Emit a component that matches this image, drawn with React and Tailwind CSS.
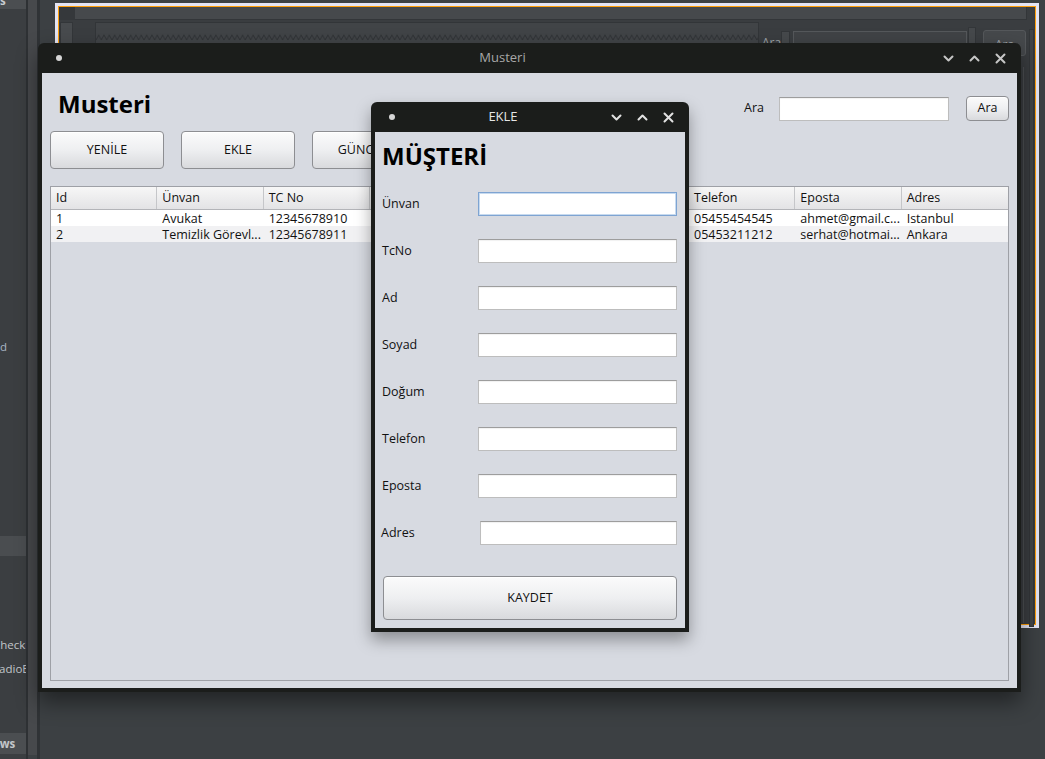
import React from "react";

const Chevron = ({ dir }) => (
    <svg width="11" height="7" viewBox="0 0 11 7" fill="none" stroke="currentColor" strokeWidth="2" strokeLinecap="round" strokeLinejoin="round">
        {dir === "down" ? <path d="M1.5 1.5 L5.5 5.5 L9.5 1.5" /> : <path d="M1.5 5.5 L5.5 1.5 L9.5 5.5" />}
    </svg>
);

const Close = () => (
    <svg width="11" height="11" viewBox="0 0 11 11" fill="none" stroke="currentColor" strokeWidth="2" strokeLinecap="round">
        <path d="M1.5 1.5 L9.5 9.5 M9.5 1.5 L1.5 9.5" />
    </svg>
);

const TitleBar = ({ title, active }) => (
    <div className={`flex h-[30px] items-center pl-[18px] pr-[15px] ${active ? "text-[#e2e2e2]" : "text-[#c6c6c6]"}`}>
        <span className="h-[6px] w-[6px] rounded-full bg-[#d6d6d6]" />
        <div className={`flex-1 text-center text-[13px] ${active ? "text-[#e6e6e6]" : "text-[#a8a8a8]"}`}>{title}</div>
        <div className="flex items-center gap-[15px]">
            <Chevron dir="down" />
            <Chevron dir="up" />
            <Close />
        </div>
    </div>
);

const Btn = ({ children, className = "" }) => (
    <button className={`flex shrink-0 items-center justify-center rounded-[4px] border border-[#8d8e92] bg-linear-to-b from-[#fbfbfb] via-[#eeeff1] to-[#d9dadd] text-[12.5px] text-[#111] shadow-[inset_0_1px_0_#ffffff] ${className}`}>
        {children}
    </button>
);

const Field = ({ focused, className = "" }) => (
    <div
        className={`h-[24px] bg-white ${
            focused
                ? "border border-[#7ea4d2] shadow-[inset_0_0_0_1px_#c7daef]"
                : "border border-[#bdbdbd] border-t-[#9d9d9d] shadow-[inset_0_1px_1px_rgba(0,0,0,0.06)]"
        } ${className}`}
    />
);

const cols = ["Id", "Ünvan", "TC No", "Ad", "Soyad", "Doğum", "Telefon", "Eposta", "Adres"];
const rows = [
    ["1", "Avukat", "12345678910", "Ahmet", "Yılmaz", "01.01.1980", "05455454545", "ahmet@gmail.c...", "Istanbul"],
    ["2", "Temizlik Görevl...", "12345678911", "Serhat", "Kaya", "05.05.1985", "05453211212", "serhat@hotmai...", "Ankara"],
];

const formRows = [
    ["Ünvan", true],
    ["TcNo"],
    ["Ad"],
    ["Soyad"],
    ["Doğum"],
    ["Telefon"],
    ["Eposta"],
];

export default function App() {
    return (
        <div className="relative flex h-[759px] w-[1045px] overflow-hidden bg-[#3c4043] font-['Open_Sans',sans-serif] text-[12.5px]">
            {/* ide palette */}
            <div className="flex w-[26px] shrink-0 flex-col overflow-hidden bg-[#3b3e41] text-[11.5px] text-[#c2c6ca]">
                <div className="h-[9px] overflow-hidden bg-[#4b4e51]">
                    <div className="-mt-[8px] whitespace-nowrap font-bold text-[#c8ccd0]">s</div>
                </div>
                <div className="mt-[330px] h-[16px] leading-[16px] whitespace-nowrap text-[#a9b6c4]">d</div>
                <div className="mt-[181px] h-[20px] bg-[#4a4d50]" />
                <div className="mt-[81px] h-[16px] leading-[16px] whitespace-nowrap -ml-[7px]">CheckBox</div>
                <div className="mt-[8px] h-[16px] leading-[16px] whitespace-nowrap -ml-[8px]">RadioButton</div>
                <div className="mt-[56px] h-[21px] bg-[#4b4e51] leading-[21px] whitespace-nowrap font-bold -ml-[18px]">Views</div>
            </div>
            <div className="w-[2px] shrink-0 bg-[#2e3134]" />
            <div className="mb-[4px] w-[9px] shrink-0 bg-[#47494c]" />
            <div className="w-[3px] shrink-0 bg-[#303336]" />
            <div className="flex-1 bg-[#3c4043]" />

            {/* design canvas */}
            <div className="absolute left-[55px] top-[3px] h-[625px] w-[984px] border-[3px] border-[#e4e4f3]">
                <div className="relative h-full w-full border border-[#ff9f0a] bg-[#3a3d40]">
                    <div className="absolute left-0 top-0 h-[13px] w-[16px] bg-[#35383b]" />
                    <div className="absolute left-[16px] top-0 h-[13px] w-[952px] border-b border-r border-[#333639] bg-[#46494c]" />
                    <div className="absolute left-[1px] top-[15px] h-[30px] w-[13px] border border-[#333639] bg-[#484b4e]" />
                    <div className="absolute left-[36px] top-[15px] h-[30px] w-[664px] border border-[#323538] bg-[#414447]">
                        <svg className="absolute left-0 top-[10px]" width="662" height="8">
                            <defs>
                                <pattern id="zz" width="5.33" height="8" patternUnits="userSpaceOnUse">
                                    <path d="M0 7 L2.66 2 L5.33 7" fill="none" stroke="#303336" strokeWidth="1" />
                                </pattern>
                            </defs>
                            <rect width="662" height="8" fill="url(#zz)" />
                        </svg>
                    </div>
                    <div className="absolute left-[703px] top-[27px] text-[12px] text-[#9ea3a8]">Ara</div>
                    <div className="absolute left-[722px] top-[24px] h-[20px] w-[9px] border border-[#333639] bg-[#46494c]" />
                    <div className="absolute left-[734px] top-[24px] h-[20px] w-[174px] border border-[#55585b] bg-[#404346]" />
                    <div className="absolute left-[909px] top-[20px] h-[20px] w-[8px] border border-[#333639] bg-[#46494c]" />
                    <div className="absolute left-[924px] top-[23px] h-[26px] w-[43px] rounded-[3px] border border-[#55585b] bg-[#46494c] pt-[5px] text-center text-[12px] text-[#9ea3a8]">Ara</div>
                    <div className="absolute left-[970px] top-[22px] h-[598px] w-[5px] border border-[#333639] bg-[#414447]" />
                    <div className="absolute left-[964px] top-[60px] h-[556px] w-[4px] border-l border-[#4d5053]" />
                </div>
            </div>

            {/* Musteri window */}
            <div className="absolute left-[38px] top-[43px] flex h-[649px] w-[983px] flex-col rounded-t-[6px] bg-[#1b1d1b] shadow-[0_10px_22px_rgba(0,0,0,0.45)]">
                <TitleBar title="Musteri" />
                <div className="mx-[4px] mb-[4px] flex flex-1 flex-col bg-[#d7dae1]">
                    <div className="flex h-[58px] pl-[16px] pr-[8px]">
                        <h1 className="mt-[15px] text-[24px] leading-[32px] font-bold text-black">Musteri</h1>
                        <div className="ml-auto mt-[23px] flex h-[25px] items-center">
                            <span className="text-[12.5px] text-[#111]">Ara</span>
                            <Field className="ml-[15px] w-[170px]" />
                            <Btn className="ml-[17px] h-[25px] w-[43px]">Ara</Btn>
                        </div>
                    </div>
                    <div className="flex gap-[17px] pl-[8px]">
                        <Btn className="h-[38px] w-[114px]">YENİLE</Btn>
                        <Btn className="h-[38px] w-[114px]">EKLE</Btn>
                        <Btn className="h-[38px] w-[114px]">GÜNCELLE</Btn>
                        <Btn className="h-[38px] w-[114px]">SİL</Btn>
                    </div>
                    <div className="ml-[8px] mt-[17px] h-[495px] w-[959px] border border-[#9ea0a6] bg-[#d7dae1]">
                        <div className="grid h-[23px] grid-cols-9 border-b border-[#b3b4b8] bg-linear-to-b from-[#f7f7f7] to-[#e3e3e5]">
                            {cols.map((c, i) => (
                                <div key={c} className={`flex items-center pl-[5px] text-[12.5px] text-[#111] ${i < 8 ? "border-r border-[#c5c6c9]" : ""}`}>
                                    {c}
                                </div>
                            ))}
                        </div>
                        {rows.map((r, ri) => (
                            <div key={ri} className={`grid h-[16px] grid-cols-9 ${ri % 2 ? "bg-[#f1f1f3]" : "bg-white"}`}>
                                {r.map((v, i) => (
                                    <div key={i} className="overflow-hidden whitespace-nowrap pl-[5px] pt-[1px] text-[12.5px] leading-[16px] text-[#111]">
                                        {v}
                                    </div>
                                ))}
                            </div>
                        ))}
                    </div>
                </div>
            </div>

            {/* EKLE dialog */}
            <div className="absolute left-[371px] top-[102px] flex h-[530px] w-[318px] flex-col rounded-t-[6px] bg-[#1b1d1b] shadow-[0_8px_16px_rgba(0,0,0,0.35)]">
                <TitleBar title="EKLE" active />
                <div className="mx-[4px] mb-[4px] flex flex-1 flex-col bg-[#d7dae1]">
                    <div className="h-[60px] pl-[7px] pt-[8px]">
                        <h2 className="text-[24px] leading-[32px] font-bold text-black">MÜŞTERİ</h2>
                    </div>
                    <div className="flex flex-col gap-[23px] pr-[8px]">
                        {formRows.map(([label, focused]) => (
                            <div key={label} className="flex h-[24px] items-center pl-[7px]">
                                <span className="pt-[1px] text-[12.5px] text-[#111]">{label}</span>
                                <Field focused={focused} className="ml-auto w-[199px]" />
                            </div>
                        ))}
                        <div className="flex h-[24px] items-center pl-[6px]">
                            <span className="pt-[1px] text-[12.5px] text-[#111]">Adres</span>
                            <Field className="ml-auto w-[197px]" />
                        </div>
                    </div>
                    <Btn className="ml-[8px] mt-[31px] h-[44px] w-[294px]">KAYDET</Btn>
                </div>
            </div>
        </div>
    );
}
